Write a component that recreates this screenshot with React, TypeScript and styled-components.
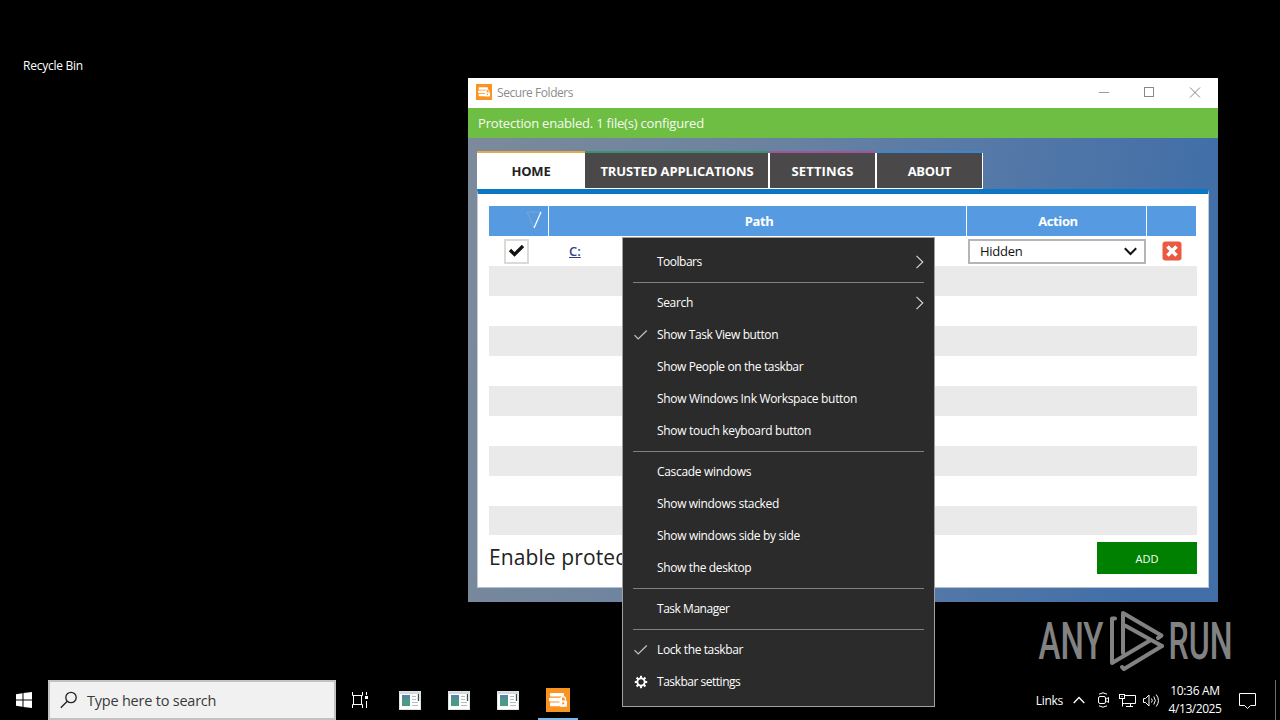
import React from "react";
import styled, { createGlobalStyle } from "styled-components";

const GlobalStyle = createGlobalStyle`
  * {
    box-sizing: border-box;
  }
  body {
    margin: 0;
    background: #000;
    overflow: hidden;
  }
  svg {
    display: block;
    flex: none;
  }
`;

const Desktop = styled.main`
  position: relative;
  display: flex;
  flex-direction: column;
  width: 1280px;
  height: 720px;
  background: #000;
  font-family: "Open Sans", "Noto Sans", sans-serif;
  font-size: 12px;
  white-space: nowrap;
  overflow: hidden;
`;

const DesktopArea = styled.section`
  flex: 1;
  padding: 57px 0 0 23px;
`;

const DesktopLabel = styled.span`
  display: block;
  color: #fff;
  font-size: 12px;
  line-height: 18px;
  letter-spacing: -0.25px;
`;

/* window */

const AppWindow = styled.section`
  position: absolute;
  left: 468px;
  top: 78px;
  width: 750px;
  height: 524px;
  display: flex;
  flex-direction: column;
`;

const TitleBar = styled.header`
  display: flex;
  align-items: center;
  height: 30px;
  padding: 0 17px 2px 8px;
  background: #fff;
  color: #8c8c8c;
`;

const WindowTitle = styled.span`
  flex: 1;
  margin-left: 5px;
  line-height: 18px;
  padding-top: 2px;
  letter-spacing: -0.45px;
`;

const WindowControls = styled.div`
  display: flex;
  gap: 34px;
`;

const StatusBar = styled.div`
  height: 30px;
  padding-left: 10px;
  background: #6fbe44;
  color: #f4fbef;
  font-size: 13px;
  line-height: 31px;
  letter-spacing: -0.19px;
`;

const WindowBody = styled.div`
  flex: 1;
  display: flex;
  flex-direction: column;
  padding: 13px 9px 14px;
  background: linear-gradient(100deg, #7c8a9b 0%, #6b83a0 35%, #5478a7 65%, #426fa8 90%);
`;

const Tabs = styled.nav`
  display: flex;
  height: 38px;
`;

const Tab = styled.div<{ $width: number; $accent: string; $spacing: number; $active?: boolean }>`
  display: flex;
  align-items: center;
  justify-content: center;
  width: ${(p) => p.$width}px;
  border-top: 2px solid ${(p) => p.$accent};
  border-bottom: 1px solid #fff;
  background: ${(p) => (p.$active ? "#fff" : "#4a4848")};
  box-shadow: ${(p) => (p.$active ? "none" : "inset -1px 0 #fff")};
  color: ${(p) => (p.$active ? "#222" : "#fff")};
  font-size: 13px;
  font-weight: 700;
  letter-spacing: ${(p) => p.$spacing}px;
  &:nth-child(n + 3) {
    box-shadow: inset -1px 0 #fff, inset 1px 0 #fff;
  }
`;

const Panel = styled.div`
  flex: 1;
  display: flex;
  flex-direction: column;
  padding: 12px 11px 0 11px;
  border-top: 5px solid #0a76c4;
  border-left: 1px solid #c5cbd3;
  border-right: 1px solid #c5cbd3;
  border-bottom: 1px solid #b5bfca;
  background: #fff;
`;

const gridColumns = "60px 418px 180px 50px";

const TableHead = styled.div`
  display: grid;
  grid-template-columns: ${gridColumns};
  height: 30px;
`;

const HeadCell = styled.div`
  display: flex;
  align-items: center;
  justify-content: center;
  padding-left: 3px;
  border-right: 1px solid #fff;
  background: #569be2;
  color: #fff;
  font-size: 13px;
  font-weight: 700;
  letter-spacing: -0.4px;
`;

const SortCell = styled(HeadCell)`
  justify-content: flex-end;
  padding: 0 5px 4px 0;
`;

const TableRow = styled.div<{ $odd?: boolean }>`
  display: grid;
  grid-template-columns: ${gridColumns};
  align-items: center;
  height: 30px;
  background: ${(p) => (p.$odd ? "#eaeaea" : "#fff")};
  &:last-child {
    height: 29px;
  }
`;

const CheckBox = styled.div`
  display: flex;
  align-items: center;
  justify-content: center;
  width: 25px;
  height: 25px;
  margin-left: 15px;
  border: 2px solid #dcdad5;
  background: #fff;
`;

const PathLink = styled.a`
  margin-left: 20px;
  color: #2f3f93;
  font-size: 13px;
  font-weight: 600;
  text-decoration: underline;
`;

const Select = styled.div`
  display: flex;
  align-items: center;
  justify-content: space-between;
  width: 178px;
  height: 25px;
  margin-left: 1px;
  padding: 0 6px 0 10px;
  border: 2px solid #b8b4b4;
  color: #111;
  font-size: 13px;
  letter-spacing: -0.25px;
`;

const DeleteCell = styled.div`
  padding-left: 15px;
`;

const PanelFooter = styled.footer`
  display: flex;
  justify-content: space-between;
  padding-top: 7px;
`;

const FooterLabel = styled.span`
  color: #222;
  font-size: 21px;
  line-height: 31px;
  letter-spacing: 0.1px;
`;

const AddButton = styled.button`
  width: 100px;
  height: 32px;
  padding: 0;
  border: 0;
  background: #008000;
  color: #fff;
  font: 11px "Open Sans", sans-serif;
  letter-spacing: 0.1px;
`;

/* taskbar menu */

const Menu = styled.ul`
  position: absolute;
  left: 622px;
  top: 237px;
  width: 313px;
  height: 470px;
  margin: 0;
  padding: 8px 10px;
  list-style: none;
  border: 1px solid #a0a0a0;
  background: #2b2b2b;
  color: #fff;
`;

const MenuItem = styled.li`
  display: grid;
  grid-template-columns: 24px 1fr auto;
  align-items: center;
  height: 32px;
  line-height: 18px;
`;

const MenuLabel = styled.span<{ $spacing: number }>`
  letter-spacing: ${(p) => p.$spacing}px;
`;

const Separator = styled.li`
  height: 9px;
  padding-top: 4px;
  &::before {
    content: "";
    display: block;
    height: 1px;
    background: #808080;
  }
`;

/* taskbar */

const Taskbar = styled.footer`
  display: flex;
  height: 40px;
  color: #fff;
`;

const TaskButton = styled.div<{ $width: number; $running?: boolean }>`
  display: flex;
  align-items: center;
  justify-content: center;
  width: ${(p) => p.$width}px;
  margin-left: ${(p) => (p.$running ? 6 : 0)}px;
  box-shadow: ${(p) => (p.$running ? "inset 0 -2px #76b9ed" : "none")};
`;

const SearchBox = styled.div`
  display: flex;
  align-items: center;
  gap: 9px;
  width: 288px;
  padding-left: 10px;
  border: 2px solid #c3c3c3;
  background: #f1f1f1;
  color: #3a3a3a;
  font-size: 14.5px;
  letter-spacing: -0.22px;
`;

const PinnedApps = styled.div`
  display: flex;
  margin-left: 2px;
`;

const Tray = styled.div`
  display: flex;
  align-items: center;
  margin-left: auto;
`;

const TrayItem = styled.div<{ $gap: number }>`
  margin-left: ${(p) => p.$gap}px;
`;

const LinksLabel = styled.span`
  letter-spacing: -0.3px;
`;

const Clock = styled.div`
  display: flex;
  flex-direction: column;
  align-items: center;
  width: 66px;
  margin-left: 2px;
  line-height: 18px;
  letter-spacing: -0.45px;
`;

const ClockTime = styled.span`
  letter-spacing: -0.3px;
`;

const ShowDesktop = styled.div`
  width: 5px;
  height: 40px;
  margin-left: 19px;
  border-left: 1px solid #6c6c6c;
`;

const Watermark = styled.svg`
  position: absolute;
  left: 1036px;
  top: 606px;
`;

const SecureIcon = ({ size }: { size: number }) => (
  <svg width={size} height={size} viewBox="0 0 24 24">
    <rect width="24" height="24" fill="#fb9320" />
    <g fill="#fff">
      <rect x="4" y="5" width="14" height="3.6" rx="1" />
      <rect x="3" y="9.8" width="13" height="3.6" rx="1" />
      <rect x="4" y="14.6" width="12" height="3.6" rx="1" />
      <rect x="13.5" y="12.4" width="7.5" height="6.4" rx="1" />
    </g>
    <path d="M15 12.5v-1.7a2.2 2.2 0 0 1 4.4 0v1.7" fill="none" stroke="#fff" strokeWidth="1.3" />
    <circle cx="17.2" cy="15.4" r="1.1" fill="#fb9320" />
  </svg>
);

const ProgramIcon = () => (
  <svg width="22" height="19" viewBox="0 0 22 19">
    <rect width="22" height="19" fill="#dfe3e5" />
    <rect x="1" y="3" width="20" height="15" fill="#fff" />
    <rect x="1" y="1" width="20" height="2" fill="#d5dade" />
    <rect x="3" y="4" width="8" height="11" fill="#4b9a86" />
    <rect x="3" y="4" width="8" height="4" fill="#5787a0" />
    <path d="M13 5.5h4M13 8.5h4M13 11.5h6M13 14.5h6" stroke="#b4bcc0" />
    <path d="M19.5 3v7" stroke="#3c5548" strokeWidth="1.3" />
  </svg>
);

const CheckMark = () => (
  <svg width="15" height="12" viewBox="0 0 15 12" fill="none" stroke="#c4c4c4" strokeWidth="1.2">
    <path d="M1.5 6.2 5.2 10 13.8 1.500" />
  </svg>
);

const GearIcon = () => (
  <svg width="16" height="14" viewBox="-8 -7 16 14" fill="none" stroke="#fff">
    <circle r="3.7" strokeWidth="1.8" />
    {[0, 45, 90, 135, 180, 225, 270, 315].map((deg) => (
      <path key={deg} d="M0-4V-6.200" strokeWidth="2.100" transform={`rotate(${deg})`} />
    ))}
  </svg>
);

const ArrowIcon = () => (
  <svg width="9" height="14" viewBox="0 0 9 14" fill="none" stroke="#d8d8d8" strokeWidth="1.1">
    <path d="M1.5.8 7.8 7 1.5 13.2" />
  </svg>
);

type Entry = { label: string; spacing: number; icon?: "check" | "gear"; submenu?: boolean };

const menuGroups: Entry[][] = [
  [{ label: "Toolbars", spacing: -0.5, submenu: true }],
  [
    { label: "Search", spacing: -0.35, submenu: true },
    { label: "Show Task View button", spacing: -0.38, icon: "check" },
    { label: "Show People on the taskbar", spacing: -0.38 },
    { label: "Show Windows Ink Workspace button", spacing: -0.32 },
    { label: "Show touch keyboard button", spacing: -0.31 },
  ],
  [
    { label: "Cascade windows", spacing: -0.32 },
    { label: "Show windows stacked", spacing: -0.34 },
    { label: "Show windows side by side", spacing: -0.33 },
    { label: "Show the desktop", spacing: -0.36 },
  ],
  [{ label: "Task Manager", spacing: -0.47 }],
  [
    { label: "Lock the taskbar", spacing: -0.38, icon: "check" },
    { label: "Taskbar settings", spacing: -0.48, icon: "gear" },
  ],
];

const TaskbarMenu = () => (
  <Menu>
    {menuGroups.map((group, i) => (
      <React.Fragment key={i}>
        {i > 0 && <Separator />}
        {group.map((entry) => (
          <MenuItem key={entry.label}>
            <span>
              {entry.icon === "check" && <CheckMark />}
              {entry.icon === "gear" && <GearIcon />}
            </span>
            <MenuLabel $spacing={entry.spacing}>{entry.label}</MenuLabel>
            {entry.submenu && <ArrowIcon />}
          </MenuItem>
        ))}
      </React.Fragment>
    ))}
  </Menu>
);

const SecureFolders = () => (
  <AppWindow>
    <TitleBar>
      <SecureIcon size={16} />
      <WindowTitle>Secure Folders</WindowTitle>
      <WindowControls>
        <svg width="11" height="11" fill="none" stroke="#999">
          <path d="M0 5.500h10" />
        </svg>
        <svg width="11" height="11" fill="none" stroke="#888">
          <rect x=".5" y=".5" width="9" height="9" />
        </svg>
        <svg width="12" height="11" fill="none" stroke="#888">
          <path d="M1 .5l10 10M11 .5l-10 10" />
        </svg>
      </WindowControls>
    </TitleBar>
    <StatusBar>Protection enabled. 1 file(s) configured</StatusBar>
    <WindowBody>
      <Tabs>
        <Tab $width={108} $accent="#e0ab4c" $spacing={-0.15} $active>
          HOME
        </Tab>
        <Tab $width={184} $accent="#3a9272" $spacing={-0.09}>
          TRUSTED APPLICATIONS
        </Tab>
        <Tab $width={107} $accent="#a0559c" $spacing={0.12}>
          SETTINGS
        </Tab>
        <Tab $width={107} $accent="#3f86d2" $spacing={-0.4}>
          ABOUT
        </Tab>
      </Tabs>
      <Panel>
        <TableHead>
          <SortCell>
            <svg width="18" height="19" fill="none">
              <path d="M2 2h14M2 2l7 16" stroke="#7fa3cb" />
              <path d="M16 2 9 18" stroke="#fff" strokeWidth="1.2" />
            </svg>
          </SortCell>
          <HeadCell>Path</HeadCell>
          <HeadCell>Action</HeadCell>
          <HeadCell />
        </TableHead>
        <div>
          <TableRow>
            <CheckBox>
              <svg width="17" height="14" fill="none" stroke="#111" strokeWidth="3.2">
                <path d="M2 6 6.500 10.500 15 2" />
              </svg>
            </CheckBox>
            <div>
              <PathLink>C:</PathLink>
            </div>
            <Select>
              Hidden
              <svg width="14" height="9" fill="none" stroke="#111" strokeWidth="2">
                <path d="M.8 1.2 6.500 7l5.700-5.800" />
              </svg>
            </Select>
            <DeleteCell>
              <svg width="20" height="20" viewBox="0 0 20 20">
                <rect x=".5" y=".5" width="19" height="19" rx="3" fill="#ea5a40" />
                <path d="M5.500 5.500l9 9M14.500 5.500l-9 9" stroke="#fff" strokeWidth="3.600" />
              </svg>
            </DeleteCell>
          </TableRow>
          {[1, 2, 3, 4, 5, 6, 7, 8, 9].map((n) => (
            <TableRow key={n} $odd={n % 2 === 1} />
          ))}
        </div>
        <PanelFooter>
          <FooterLabel>Enable protection</FooterLabel>
          <AddButton>ADD</AddButton>
        </PanelFooter>
      </Panel>
    </WindowBody>
  </AppWindow>
);

export default function App() {
  return (
    <>
      <GlobalStyle />
      <Desktop>
        <DesktopArea>
          <DesktopLabel>Recycle Bin</DesktopLabel>
        </DesktopArea>

        <Watermark width="230" height="68" viewBox="0 0 230 68">
          <g fill="#828282" fontFamily="Roboto, sans-serif" fontWeight="500" fontSize="51.500">
            <text x="2.500" y="53" textLength="65" lengthAdjust="spacingAndGlyphs">
              ANY
            </text>
            <text x="132.500" y="53" textLength="64" lengthAdjust="spacingAndGlyphs">
              RUN
            </text>
          </g>
          <g fill="none" stroke="#828282" strokeWidth="4" strokeLinecap="round" strokeLinejoin="round">
            <path d="M87 47V7l38.500 22.500-3.500 2.500M89 19.500l37 20.500" />
            <path d="M79 12.500h-3V57l38-22.500" />
            <path d="M126 40 88 63l-2-2" />
          </g>
        </Watermark>

        <SecureFolders />

        <Taskbar>
          <TaskButton $width={48}>
            <svg width="16" height="16" fill="#fff">
              <path d="M0 2.200 6.500 1.300V7.500H0zM7.500 1.100 16 0v7.500H7.500zM0 8.500h6.500v6.200L0 13.800zM7.500 8.500H16V16l-8.500-1.100z" />
            </svg>
          </TaskButton>
          <SearchBox>
            <svg width="18" height="18" fill="none" stroke="#222" strokeWidth="1.300">
              <circle cx="11" cy="6.500" r="5.200" />
              <path d="M7.300 10.200.8 16.800" />
            </svg>
            Type here to search
          </SearchBox>
          <TaskButton $width={48}>
            <svg width="17" height="16" fill="none" stroke="#fff">
              <path d="M.5 0v3.500h10V0M.5 16v-3.500h10V16M1.500 3.500v9M9.500 3.500v9M14.500 0v3M14.500 9v7" />
              <rect x="13" y="4" width="3" height="3" fill="#fff" stroke="none" />
            </svg>
          </TaskButton>
          <PinnedApps>
            <TaskButton $width={48}>
              <ProgramIcon />
            </TaskButton>
            <TaskButton $width={50}>
              <ProgramIcon />
            </TaskButton>
            <TaskButton $width={48}>
              <ProgramIcon />
            </TaskButton>
            <TaskButton $width={40} $running>
              <SecureIcon size={24} />
            </TaskButton>
          </PinnedApps>
          <Tray>
            <LinksLabel>Links</LinksLabel>
            <TrayItem $gap={10}>
              <svg width="12" height="8" fill="none" stroke="#fff" strokeWidth="1.300">
                <path d="M.7 7 6 1.500 11.300 7" />
              </svg>
            </TrayItem>
            <TrayItem $gap={12}>
              <svg width="13" height="16" fill="none" stroke="#fff">
                <rect x="1.500" y="4.500" width="7" height="7" rx="1.500" />
                <path d="M8.500 7.500l3-2v5l-3-2M2 2.200Q6 -.6 10 2.200M2 13.800Q6 16.600 10 13.800" />
              </svg>
            </TrayItem>
            <TrayItem $gap={9}>
              <svg width="17" height="15" fill="none" stroke="#fff">
                <path d="M5.500 2.500h11v8h-11M11.500 10.500v3M7 13.500h7" />
                <rect x=".5" y="1.500" width="5" height="4" />
                <path d="M2.500 3.500h1M3.500 5.500v8M3.500 10.500h2" />
              </svg>
            </TrayItem>
            <TrayItem $gap={7}>
              <svg width="17" height="15" fill="none" stroke="#fff">
                <path d="M.5 5.500h2l3.500-3.500v11L2.500 9.500h-2z" />
                <path d="M8.500 5.500q1.500 2 0 4M10.800 3.500q3 4 0 8M13.200 1.500q4.500 6 0 12" />
              </svg>
            </TrayItem>
            <Clock>
              <ClockTime>10:36 AM</ClockTime>
              <span>4/13/2025</span>
            </Clock>
            <TrayItem $gap={11}>
              <svg width="17" height="17" fill="none" stroke="#fff">
                <path d="M.5 1.500h16v12h-5l-3 3-3-3h-5z" />
              </svg>
            </TrayItem>
            <ShowDesktop />
          </Tray>
        </Taskbar>

        <TaskbarMenu />
      </Desktop>
    </>
  );
}
